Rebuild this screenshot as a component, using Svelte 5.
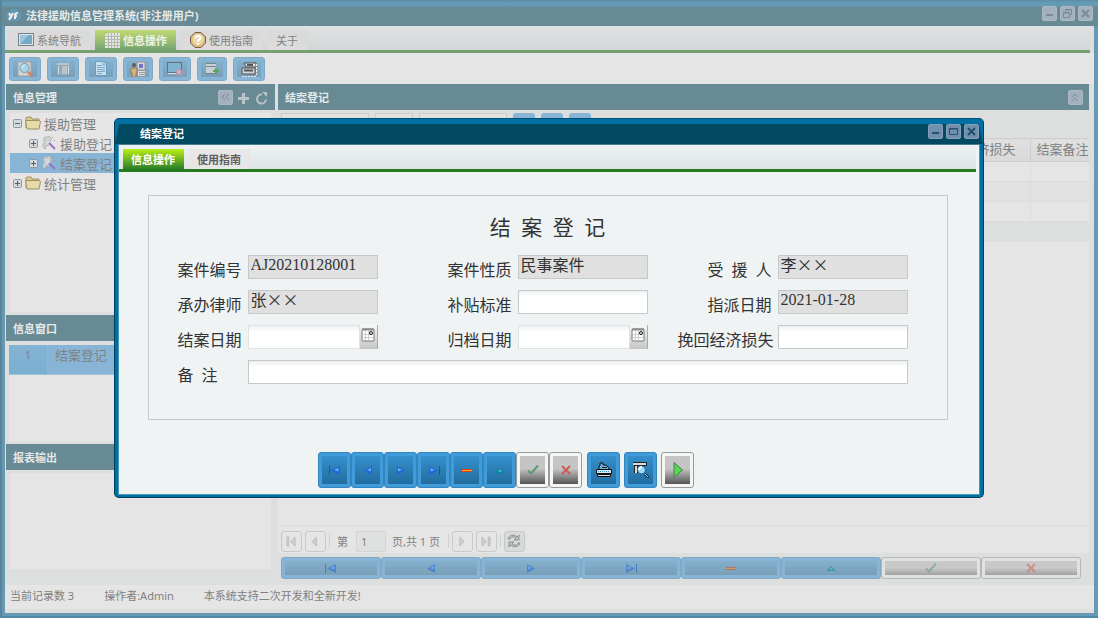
<script lang="ts">
	type Tab = { text: string; icon?: string };

	const tabs: Tab[] = [
		{ text: '系统导航', icon: 'screen' },
		{ text: '信息操作', icon: 'grid' },
		{ text: '使用指南', icon: 'help' },
		{ text: '关于' }
	];
	const tools = [
		{ icon: 'search', label: '查询' },
		{ icon: 'list', label: '列表' },
		{ icon: 'page', label: '文档' },
		{ icon: 'user', label: '用户', narrow: true },
		{ icon: 'globe', label: '浏览' },
		{ icon: 'add', label: '新增', narrow: true },
		{ icon: 'print', label: '打印' }
	];
	const tree = [
		{ text: '援助管理', open: true, level: 0 },
		{ text: '援助登记', open: false, level: 1 },
		{ text: '结案登记', open: false, level: 1 },
		{ text: '统计管理', open: false, level: 0 }
	];
	const nav = [
		{ icon: 'first', label: '首记录' },
		{ icon: 'prev', label: '上一条' },
		{ icon: 'next', label: '下一条' },
		{ icon: 'last', label: '末记录' },
		{ icon: 'minus', label: '删除' },
		{ icon: 'up', label: '编辑' },
		{ icon: 'check', label: '保存', gray: true },
		{ icon: 'cross', label: '取消', gray: true }
	];
	const columns = ['案件编号', '案件性质', '受援人', '承办律师', '结案日期', '归档日期'];

	let activeTab = $state('信息操作');
	let dialogTab = $state('信息操作');
	let selected = $state('结案登记');
	let page = $state('1');
	let record = $state({
		code: 'AJ20210128001',
		kind: '民事案件',
		person: '李××',
		lawyer: '张××',
		subsidy: '',
		assigned: '2021-01-28',
		closed: '',
		filed: '',
		loss: '',
		note: ''
	});
</script>

{#snippet icon(name: string)}
	<svg class="icon" viewBox="0 0 16 16" width="16" height="16" aria-hidden="true">
		{#if name === 'screen'}
			<rect x="0.5" y="1.500" width="15" height="12" fill="#dfe3e5" stroke="#74828b" />
			<rect x="2" y="3" width="12" height="9" fill="#76a9c8" />
			<path d="M2 12V3h9z" fill="#9cc4da" />
		{:else if name === 'grid'}
			<path d="M3 1h13v15H1V3z" fill="#e5e5e5" />
			<path d="M1 4.5h15M1 7.5h15M1 10.5h15M1 13.5h15M4.5 1v15M7.5 1v15M10.5 1v15M13.5 1v15" stroke="#b2bbae" />
		{:else if name === 'help'}
			<path d="M5 .5h6L15.500 5v6L11 15.500H5L.5 11V5z" fill="#dfbd78" stroke="#7d5a4d" />
			<circle cx="8" cy="7.500" r="5.500" fill="#e9dba9" />
			<path d="M6 6c0-3 5-3 4.500 0C10.300 7.500 8 7.500 8 9.500M8 11v2" fill="none" stroke="#fff" stroke-width="2" />
		{:else if name === 'search'}
			<path d="M1 1h13v14H1z" fill="#d3d3d3" stroke="#a0a6a8" />
			<circle cx="7.500" cy="7" r="4.500" fill="#a5d5ea" stroke="#7599ad" />
			<path d="M5 7c0-2 1-3 3-3" stroke="#edfaff" fill="none" />
			<path d="M11 11l4 4" stroke="#d4826c" stroke-width="3" />
		{:else if name === 'list'}
			<path d="M2 2h12v12H2z" fill="#93a9b5" />
			<path d="M2 3h12M7 6h5M7 8h5M7 10h5M7 12h5" stroke="#dce1e3" />
			<path d="M3.500 5v8M13.500 5v8" stroke="#d6dcdf" />
		{:else if name === 'page'}
			<path d="M2.500 .5h8l3 3v11h-11z" fill="#c9e0ee" stroke="#679cbf" />
			<path d="M10 1v3h3M4 4.500h5M4 6.500h8M4 8.500h8M4 10.500h8M4 12.500h5" stroke="#77a8c8" fill="none" />
		{:else if name === 'user'}
			<rect x="7" y="1" width="8" height="8" fill="#d5d5d5" stroke="#999" />
			<rect x="9" y="3" width="4" height="4" fill="#7377c9" />
			<path d="M8 10h7v5H8z" fill="#ddd" />
			<path d="M9 11.500h6M9 13.500h6" stroke="#9d9d9d" />
			<circle cx="4" cy="4" r="2" fill="#5d5d5d" />
			<path d="M1 7h6v5H6v4H2v-4H1z" fill="#d5b37f" stroke="#957b57" />
		{:else if name === 'globe'}
			<rect x="0.500" y="1.500" width="14" height="10" fill="#82b3cd" stroke="#5f727e" />
			<path d="M1 12.500h14" stroke="#d9dfe2" />
			<circle cx="12.500" cy="11.500" r="3.500" fill="#b98eb9" />
			<path d="M10 10l3-1v3l-2 1z" fill="#ddc282" />
			<path d="M13 12l2-1v3h-2z" fill="#7fb5d8" />
		{:else if name === 'add'}
			<rect x="2" y="2" width="10" height="11" fill="#c7d0d2" />
			<path d="M2 2.500h10M2 5.500h10M2 12.500h10" stroke="#77888d" />
			<path d="M12 7v6M9 10h6" stroke="#58a267" stroke-width="2" />
		{:else if name === 'print'}
			<path d="M3 2h12v4H5z" fill="#ddd" stroke="#555" />
			<path d="M1 7h13v6H1z" fill="#d5d5d5" stroke="#555" />
			<path d="M3 9.500h9M6 4h6" stroke="#555" stroke-width="2" />
			<path d="M1 15.500h14M15.500 3v12" stroke="#eee" stroke-dasharray="2 1" fill="none" />
		{:else if name === 'first'}
			<path d="M2.500 4v9" stroke="#1650c4" />
			<path d="M13 4v9L4 8.500z" fill="#2064d8" />
			<path d="M11.500 6v3.500L7 8z" fill="#62b2ff" />
		{:else if name === 'prev'}
			<path d="M12 4v9L4 8.500z" fill="#2064d8" />
			<path d="M11 6v3.500L7 8z" fill="#62b2ff" />
		{:else if name === 'next'}
			<path d="M4 4v9l8-4.500z" fill="#2064d8" />
			<path d="M5 6v3.500L9 8z" fill="#62b2ff" />
		{:else if name === 'last'}
			<path d="M13.500 4v9" stroke="#1650c4" />
			<path d="M3 4v9l9-4.500z" fill="#2064d8" />
			<path d="M4.500 6v3.500L9 8z" fill="#62b2ff" />
		{:else if name === 'minus'}
			<path d="M3 7h10v3H3z" fill="#e33f08" />
			<path d="M3 8.500h10" stroke="#ffa030" />
		{:else if name === 'up'}
			<path d="M3 11h10L8 6z" fill="#08879b" />
			<path d="M6 9.500h4L8 7.500z" fill="#3fe0dc" />
		{:else if name === 'check'}
			<path d="M3 8.500l3 3 7-8" fill="none" stroke="#5b9b6f" stroke-width="2" />
		{:else if name === 'cross'}
			<path d="M4 4l8 8M12 4l-8 8" stroke="#cf5b55" stroke-width="2" />
		{:else if name === 'printer'}
			<path d="M3 7V4h1V1h3v2h3l3 3v1" fill="#6fb4e6" stroke="#111" />
			<path d="M6 5.500h5" stroke="#111" />
			<path d="M.5 7.500h15v4H.5z" fill="#d8e8f4" stroke="#111" />
			<path d="M2 9.500h11" stroke="#2f8cc8" stroke-dasharray="1 1" />
			<path d="M1.500 12.500h13v2h-13z" fill="#ddd" stroke="#111" />
		{:else if name === 'preview'}
			<path d="M0 0h14v3H0zM1 4h3v7H1z" fill="#ddd" />
			<path d="M0 .5h14M1 3.500h12M1.500 4v7M4.500 4v7M13.500 1v3" stroke="#222" fill="none" />
			<circle cx="8.500" cy="8" r="4" fill="#9cdcff" stroke="#1d5c86" />
			<path d="M6 8c0-2 1-3 3-3" stroke="#fff" stroke-width="2" fill="none" />
			<path d="M12 12l4 4" stroke="#0d3c5d" stroke-width="3" />
			<path d="M12 12l3 3" stroke="#8fd0ff" />
		{:else if name === 'play'}
			<path d="M4 .5v15l8.500-7.500z" fill="#52d94f" stroke="#54745a" />
		{:else if name === 'folder'}
			<path d="M1 13V3l1-1h4l1 2h7v3" fill="#ddcb94" stroke="#a2905e" />
			<path d="M.5 5.500h13l2 1-1.500 7.500H2z" fill="#e5dbaa" stroke="#a2905e" />
		{:else if name === 'wand'}
			<path d="M2 9l2-2-2-2 2-3h3l1-1 2 2v3l-3 1 1 3-3 1-1 3-2-2z" fill="#cfcfcf" stroke="#b8b8b8" />
			<path d="M6 6l3 3" stroke="#d3e0e8" stroke-width="3" />
			<path d="M8 8l6 6" stroke="#a06fc0" stroke-width="2" />
			<path d="M11 2l1 1M13 5l1 1M4 13l1 1" stroke="#999" />
		{:else if name === 'refresh'}
			<path d="M2 6c1-4 6-5 9-2l2-2v5H8l2-2C8 3 5 4 4 6zM14 10c-1 4-6 5-9 2l-2 2V9h5l-2 2c2 2 5 1 6-1z" fill="#c4c4c4" stroke="#8e8e8e" />
		{:else if name === 'calendar'}
			<rect x="2" y="2" width="12" height="12" rx="1" fill="#fff" stroke="#777" />
			<path d="M2 2.500h12" stroke="#888" stroke-width="2" />
			<path d="M5.500 4v9M8.500 4v9M3 7.500h10M3 10.500h10" stroke="#ccc" />
			<circle cx="11" cy="6" r="1.500" fill="#fff" stroke="#111" />
		{/if}
	</svg>
{/snippet}

{#snippet windowTools(middle: string)}
	<div class="window-tools">
		<button aria-label="最小化"><svg viewBox="0 0 15 15"><path d="M4 9h7" stroke-width="2" /></svg></button>
		<button aria-label="最大化">
			<svg viewBox="0 0 15 15">
				{#if middle === 'restore'}
					<path d="M5.500 6V3.500h6v5H10M3.500 6.500h6v5h-6zM3 7h7M5 4h7" />
				{:else}
					<path d="M3.500 4.500h8v6h-8zM3 5h9" />
				{/if}
			</svg>
		</button>
		<button aria-label="关闭"><svg viewBox="0 0 15 15"><path d="M4 4l7 7M11 4l-7 7" stroke-width="2" /></svg></button>
	</div>
{/snippet}

{#snippet pagerIcon(d: string)}
	<svg viewBox="0 0 21 21" aria-hidden="true"><path {d} /></svg>
{/snippet}

<div class="app">
	<header class="titlebar">
		<svg class="logo" viewBox="0 0 16 14" width="16" height="14" aria-hidden="true">
			<path d="M2 11C-1 9 0 5 3 4c1-4 8-5 10 0 3 0 4 5 1 7-2 3-9 3-12 0z" fill="#6297b4" />
			<path d="M3 5l2 4 2-4M5 8l-2 4M9 11V7c0-2 2-2 3-2M9 8h2" stroke="#eee" stroke-width="2" fill="none" />
		</svg>
		<h1>法律援助信息管理系统(非注册用户)</h1>
		{@render windowTools('restore')}
	</header>

	<div class="window">
		<nav class="tabs">
			{#each tabs as tab (tab.text)}
				<button class="tab" class:active={activeTab === tab.text} onclick={() => (activeTab = tab.text)}>
					{#if tab.icon}{@render icon(tab.icon)}{/if}
					{tab.text}
				</button>
			{/each}
		</nav>

		<div class="toolbar">
			{#each tools as tool (tool.icon)}
				<button class:narrow={tool.narrow} aria-label={tool.label}><span>{@render icon(tool.icon)}</span></button>
			{/each}
		</div>

		<div class="workspace">
			<aside class="sidebar">
				<section class="panel grow">
					<header class="panel-head">
						<h2>信息管理</h2>
						<button class="square" aria-label="折叠">
							<svg viewBox="0 0 15 15"><path d="M7 4L4 7l3 3M11 4L8 7l3 3" /></svg>
						</button>
						<button aria-label="展开">
							<svg viewBox="0 0 15 15"><path d="M7.500 3v11M2 8.500h11" stroke="#bac4c8" stroke-width="3" /></svg>
						</button>
						<button aria-label="刷新">
							<svg viewBox="0 0 15 15">
								<path d="M8 4.500a4.500 4.500 0 1 0 4 5" stroke="#bac4c8" stroke-width="2" />
								<path d="M8 2h5v5z" fill="#bac4c8" stroke="none" />
							</svg>
						</button>
					</header>
					<ul class="tree">
						{#each tree as node (node.text)}
							<li class:nested={node.level === 1} class:selected={selected === node.text}>
								<button onclick={() => (selected = node.text)}>
									<svg class="expander" viewBox="0 0 9 9" aria-hidden="true">
										<rect x="0.500" y="0.500" width="8" height="8" rx="1" fill="#d6d9dc" stroke="#8b98a8" />
										<path d={node.open ? 'M2 4.500h5' : 'M2 4.500h5M4.500 2v5'} stroke="#53616e" />
									</svg>
									{@render icon(node.level ? 'wand' : 'folder')}
									{node.text}
								</button>
							</li>
						{/each}
					</ul>
				</section>
				<section class="panel">
					<header class="panel-head"><h2>信息窗口</h2></header>
					<div class="info">
						<div class="info-row">
							<span class="num">1</span>
							<span>结案登记</span>
						</div>
					</div>
				</section>
				<section class="panel">
					<header class="panel-head"><h2>报表输出</h2></header>
					<div class="reports"></div>
				</section>
			</aside>

			<main class="main">
				<header class="panel-head">
					<h2>结案登记</h2>
					<button class="square" aria-label="收起">
						<svg viewBox="0 0 15 15"><path d="M4 7l3-3 3 3M4 11l3-3 3 3" /></svg>
					</button>
				</header>
				<div class="filters">
					<select class="wide" aria-label="字段"><option></option></select>
					<select aria-label="条件"><option></option></select>
					<select class="wide" aria-label="内容"><option></option></select>
					<button aria-label="查找"></button>
					<button aria-label="筛选"></button>
					<button aria-label="导出"></button>
				</div>
				<div class="records">
					<table>
						<thead>
							<tr>
								{#each columns as column (column)}<th>{column}</th>{/each}
								<th class="loss">挽回经济损失</th>
								<th class="remark">结案备注</th>
							</tr>
						</thead>
						<tbody>
							{#each [1, 2, 3] as row (row)}
								<tr>
									{#each columns as column (column)}<td></td>{/each}
									<td></td>
									<td></td>
								</tr>
							{/each}
						</tbody>
					</table>
					<div class="strip"></div>
				</div>
				<div class="pager">
					<button aria-label="首页">{@render pagerIcon('M5.500 5.500h2v10h-2zM14.500 5.500v10l-5-5z')}</button>
					<button aria-label="上一页">{@render pagerIcon('M11.500 5.500v10l-5-5z')}</button>
					<i></i>
					<label for="page">第</label>
					<input id="page" bind:value={page} />
					<span>页,共 1 页</span>
					<i></i>
					<button aria-label="下一页">{@render pagerIcon('M7.500 5.500v10l5-5z')}</button>
					<button aria-label="末页">{@render pagerIcon('M5.500 5.500v10l5-5zM12.500 5.500h2v10h-2z')}</button>
					<i></i>
					<button class="reload" aria-label="重新载入">{@render icon('refresh')}</button>
				</div>
				<div class="navbar">
					{#each nav as item (item.icon)}
						<button class:gray={item.gray} aria-label={item.label}><span>{@render icon(item.icon)}</span></button>
					{/each}
				</div>
			</main>
		</div>

		<footer class="status">
			<span>当前记录数 3</span>
			<span>操作者:Admin</span>
			<span>本系统支持二次开发和全新开发!</span>
		</footer>
	</div>
</div>

<div class="overlay">
	<div class="dialog" role="dialog" aria-labelledby="dialog-title">
		<header class="dialog-title">
			<h2 id="dialog-title">结案登记</h2>
			{@render windowTools('max')}
		</header>
		<div class="dialog-body">
			<nav class="tabs dialog-tabs">
				{#each ['信息操作', '使用指南'] as tab (tab)}
					<button class="tab" class:active={dialogTab === tab} onclick={() => (dialogTab = tab)}>{tab}</button>
				{/each}
			</nav>

			<form class="card">
				<h3>结&ensp;案&ensp;登&ensp;记</h3>
				<div class="fields">
					<label for="code">案件编号</label>
					<input id="code" readonly bind:value={record.code} />
					<label for="kind" class="second">案件性质</label>
					<input id="kind" class="hanzi" readonly bind:value={record.kind} />
					<label for="person" class="third">受&ensp;援&ensp;人</label>
					<input id="person" class="hanzi" readonly bind:value={record.person} />

					<label for="lawyer">承办律师</label>
					<input id="lawyer" class="hanzi" readonly bind:value={record.lawyer} />
					<label for="subsidy" class="second">补贴标准</label>
					<input id="subsidy" bind:value={record.subsidy} />
					<label for="assigned" class="third">指派日期</label>
					<input id="assigned" readonly bind:value={record.assigned} />

					<label for="closed">结案日期</label>
					<div class="date">
						<input id="closed" bind:value={record.closed} />
						<button type="button" aria-label="选择结案日期">{@render icon('calendar')}</button>
					</div>
					<label for="filed" class="second">归档日期</label>
					<div class="date">
						<input id="filed" bind:value={record.filed} />
						<button type="button" aria-label="选择归档日期">{@render icon('calendar')}</button>
					</div>
					<label for="loss" class="third long">挽回经济损失</label>
					<input id="loss" bind:value={record.loss} />

					<label for="note">备&ensp;注</label>
					<input id="note" class="note" bind:value={record.note} />
				</div>
			</form>

			<div class="actions">
				<div class="group">
					{#each nav as item (item.icon)}
						<button class:gray={item.gray} aria-label={item.label}><span>{@render icon(item.icon)}</span></button>
					{/each}
				</div>
				<button aria-label="打印"><span>{@render icon('printer')}</span></button>
				<button aria-label="预览"><span>{@render icon('preview')}</span></button>
				<button class="gray" aria-label="执行"><span>{@render icon('play')}</span></button>
			</div>
		</div>
	</div>
</div>

<style>
	:global(body) {
		background: #6699b3;
		font-family: 'Noto Sans', 'Noto Sans CJK SC', sans-serif;
		font-size: 11px;
		color: #7f8181;
	}
	* {
		box-sizing: border-box;
	}
	h1,
	h2,
	h3,
	ul {
		margin: 0;
		padding: 0;
		font-size: 11px;
	}
	button,
	input,
	select {
		font: inherit;
		color: inherit;
		margin: 0;
		padding: 0;
		border: 0;
		background: none;
		border-radius: 0;
	}
	svg {
		display: block;
		flex: none;
	}

	.app {
		display: flex;
		flex-direction: column;
		min-height: 100vh;
		background: linear-gradient(#5b8fa9, #6699b3 3px, #6699b3 6px, #678a95 7px, #678a95 26px, #6699b3 27px);
		border-bottom: 2px solid #4e88a4;
		border-left: 2px solid #5c8499;
	}
	.titlebar {
		display: flex;
		align-items: center;
		gap: 4px;
		height: 26px;
		padding: 4px 5px 0 4px;
		color: #e6e9ea;
	}
	.titlebar h1 {
		flex: 1;
	}
	.window-tools {
		display: flex;
		gap: 3px;
		align-self: flex-start;
	}
	.titlebar .window-tools {
		padding-top: 2px;
	}
	.window-tools button,
	.square {
		width: 15px;
		height: 15px;
		border-radius: 3px;
		background: #a3b0be;
		box-shadow: inset 0 0 0 1px #adb8c4;
	}
	.window-tools svg,
	.panel-head svg {
		fill: none;
		stroke: #7b8b9c;
	}

	.window {
		flex: 1;
		display: flex;
		flex-direction: column;
		margin: 0 4px 3px 3px;
		background: #dcdfde;
	}
	.tabs {
		display: flex;
		align-items: flex-end;
		gap: 5px;
		height: 27px;
		margin-right: 4px;
		padding: 0 4px;
		background: linear-gradient(#dfe1e1, #d2d7d7);
		border-bottom: 3px solid #76a070;
	}
	.tab {
		display: flex;
		align-items: center;
		gap: 3px;
		height: 20px;
		padding: 0 9px;
		background: linear-gradient(#d9d9d9, #dedcdd);
	}
	.tab.active {
		font-weight: bold;
		color: #edf3e6;
		background: linear-gradient(#c1d973, #75a471);
	}
	.toolbar {
		display: flex;
		gap: 6px;
		padding: 4px 4px 3px;
		background: #e5e5e5;
	}
	.toolbar button,
	.actions button,
	.navbar button {
		display: flex;
		border-radius: 3px;
		padding: 3px;
		background: #88b5d5;
		border: 1px solid #7fa9c5;
	}
	.toolbar button {
		width: 32px;
		height: 24px;
	}
	.toolbar .narrow {
		width: 30px;
	}
	.toolbar span,
	.actions span,
	.navbar span {
		flex: 1;
		align-self: stretch;
		display: flex;
		align-items: center;
		justify-content: center;
		background: linear-gradient(#84afcc, #789fb7);
	}

	.workspace {
		flex: 1;
		display: flex;
		gap: 3px;
		padding: 0 5px 0 1px;
	}
	.sidebar {
		width: 269px;
		display: flex;
		flex-direction: column;
	}
	.panel {
		display: flex;
		flex-direction: column;
	}
	.grow {
		flex: 1;
	}
	.panel-head {
		display: flex;
		align-items: center;
		gap: 3px;
		height: 26px;
		padding: 0 6px 0 7px;
		background: #678a95;
		color: #e6e9ea;
	}
	.panel-head h2 {
		flex: 1;
	}
	.panel-head button {
		width: 15px;
		height: 15px;
	}
	.tree {
		flex: 1;
		margin: 3px 4px;
		background: #e5e5e5;
		list-style: none;
		font-size: 13px;
	}
	.tree button {
		display: flex;
		align-items: center;
		gap: 3px;
		width: 100%;
		height: 20px;
		padding-left: 3px;
	}
	.tree .nested button {
		padding-left: 19px;
	}
	.expander {
		width: 9px;
		height: 9px;
	}
	.tree .selected {
		background: #88b5d5;
	}
	.info,
	.reports {
		height: 96px;
		margin: 4px 4px 3px 3px;
		background: #e5e5e5;
		font-size: 13px;
	}
	.reports {
		margin: 3px 4px 16px;
	}
	.info-row {
		display: grid;
		grid-template-columns: 39px 1fr;
		height: 30px;
		line-height: 20px;
		background: #88b5d5;
		border-bottom: 1px solid #a3c3d8;
	}
	.info-row span {
		padding-left: 7px;
	}
	.info-row .num {
		padding: 0;
		text-align: center;
		font-size: 11px;
		background: linear-gradient(#84b3d4, #7aafd2);
		border-right: 1px solid #93b7cf;
	}

	.main {
		flex: 1;
		min-width: 0;
		display: flex;
		flex-direction: column;
	}
	.filters {
		display: flex;
		gap: 6px;
		padding: 3px;
	}
	.filters select {
		width: 38px;
		height: 22px;
		border: 1px solid #c9cccb;
		appearance: none;
		background: #e1e3e2;
	}
	.filters .wide {
		width: 88px;
	}
	.filters button {
		width: 22px;
		height: 22px;
		border-radius: 3px;
		background: #88b5d5;
	}
	.records {
		flex: 1;
		background: #e5e5e5;
		border-bottom: 1px solid #d9dcdb;
	}
	table {
		width: 100%;
		table-layout: fixed;
		border-collapse: collapse;
		font-size: 13px;
	}
	th {
		height: 23px;
		padding: 0 0 3px 6px;
		line-height: 18px;
		font-weight: normal;
		text-align: left;
		white-space: nowrap;
		overflow: hidden;
		background: linear-gradient(#e0e0e0, #d9d9d9);
		border: 1px solid #cdcfcf;
		border-right: 0;
	}
	.loss {
		width: 99px;
	}
	.remark {
		width: 59px;
	}
	td {
		height: 20px;
		padding: 0;
		border: 1px solid #dcdcdc;
		border-right: 0;
	}
	tbody tr:nth-child(2) {
		background: #e1e1e1;
	}
	.strip {
		height: 20px;
		background: #dcdfde;
	}
	.pager {
		display: flex;
		align-items: center;
		gap: 3px;
		height: 27px;
		padding: 3px 3px 0;
		background: #e5e5e5;
	}
	.pager button {
		width: 21px;
		height: 21px;
		border: 1px solid #c8caca;
		border-radius: 3px;
	}
	.pager button svg {
		width: 19px;
		height: 19px;
		fill: #cdcfcf;
		stroke: #bbbdbd;
	}
	.pager .reload {
		padding: 1px;
		background: #d8dbdb;
	}
	.pager .reload svg {
		width: 16px;
		height: 16px;
	}
	.pager i {
		width: 1px;
		height: 14px;
		background: #cfd2d2;
	}
	.pager label {
		padding: 0 5px 0 4px;
	}
	.pager input {
		width: 30px;
		height: 21px;
		padding: 0 4px;
		background: #dfe1e1;
		border: 1px solid #d3d6d6;
	}
	.pager span {
		padding: 0 5px 0 3px;
	}
	.navbar {
		display: flex;
		padding: 4px 8px 6px 3px;
	}
	.navbar button {
		flex: 1;
		height: 22px;
	}
	.navbar .icon {
		opacity: 0.5;
	}
	.navbar .gray {
		background: #e0e1e1;
		border-color: #b5b7b7;
	}
	.navbar .gray span {
		background: linear-gradient(#c8c8c8 50%, #a2a2a2);
	}
	.status {
		display: flex;
		align-items: center;
		gap: 30px;
		height: 24px;
		padding: 0 4px 4px 5px;
		margin-bottom: 4px;
		background: #e5e5e5;
	}

	.overlay {
		position: fixed;
		inset: 0;
		display: flex;
		align-items: center;
		justify-content: center;
		padding: 0 114px 2px;
	}
	.dialog {
		flex: 1;
		padding-bottom: 2px;
		border-radius: 5px;
		background: #0070a4;
		border: 1px solid #00405f;
		border-top-color: #005078;
	}
	.dialog-title {
		display: flex;
		align-items: center;
		height: 20px;
		margin-top: 5px;
		padding: 0 4px 0 25px;
		background: #024a62;
		clip-path: polygon(4px 0, calc(100% - 4px) 0, 100% 100%, 0 100%);
		color: #fff;
	}
	.dialog-title h2 {
		flex: 1;
		padding-bottom: 3px;
	}
	.dialog-title .window-tools button {
		background: #6f8fac;
		box-shadow: inset 0 0 0 1px #839fba;
	}
	.dialog-title .window-tools svg {
		stroke: #23506f;
	}
	.dialog-body {
		margin: 0 3px;
		padding: 0 3px 6px 0;
		background: #eff3f4;
		border: 1px solid #4699bb;
		border-top-color: #497f91;
	}
	.dialog-tabs {
		margin: 0;
		padding: 0 4px;
		background: linear-gradient(#edf1f1, #dfe5e5);
		border-bottom-color: #257b1e;
	}
	.dialog-tabs .tab {
		padding: 0 9px 0 8px;
		color: #606060;
		font-weight: bold;
		background: #e8e6e7;
	}
	.dialog-tabs .active {
		color: #fff;
		background: linear-gradient(#b9ef15, #2a7f28);
	}
	.card {
		max-width: 800px;
		margin: 23px auto 32px;
		border: 1px solid #c4c9ca;
		color: #333;
		font-family: 'Liberation Serif', 'Noto Sans CJK SC', serif;
		font-size: 16px;
	}
	.card h3 {
		padding-top: 17px;
		line-height: 30px;
		font-size: 21px;
		font-weight: normal;
		text-align: center;
	}
	.fields {
		display: grid;
		grid-template-columns: 70px 130px 1fr 70px 130px 30px 100px 130px;
		row-gap: 11px;
		padding: 12px 39px 35px 29px;
	}
	.fields label {
		height: 24px;
		line-height: 32px;
		white-space: nowrap;
	}
	.second {
		grid-column: 4;
	}
	.third {
		grid-column: 7;
		padding-left: 30px;
	}
	.third.long {
		padding-left: 0;
	}
	.fields input {
		width: 100%;
		min-width: 0;
		height: 24px;
		padding: 0 2px 4px;
		border: 1px solid #c6c9ca;
		background: linear-gradient(#edf0f1, #fff 6px);
	}
	.fields input:read-only {
		background: #e0e0e0;
	}
	.fields .hanzi {
		padding-bottom: 6px;
		font-family: 'Noto Sans CJK SC', sans-serif;
	}
	.fields .note {
		grid-column: 2 / -1;
	}
	.date {
		display: flex;
		border-right: 1px solid #a7abac;
	}
	.date input {
		border-color: #dfe2e3;
	}
	.date button {
		width: 17px;
		flex: none;
		padding-bottom: 4px;
		background: linear-gradient(#f7f7f7, #c5c5c5);
	}

	.actions {
		display: flex;
		gap: 4px;
		padding-left: 199px;
	}
	.group {
		display: flex;
		margin-right: 1px;
	}
	.actions button {
		width: 33px;
		height: 36px;
		background: #409bdb;
		border-color: #3385bd;
	}
	.actions span {
		background: linear-gradient(#3690cc, #226d9f);
	}
	.actions .gray {
		background: #f4f6f6;
		border-color: #999;
	}
	.actions .gray span {
		background: linear-gradient(#c5c5c5 45%, #555);
	}
</style>
